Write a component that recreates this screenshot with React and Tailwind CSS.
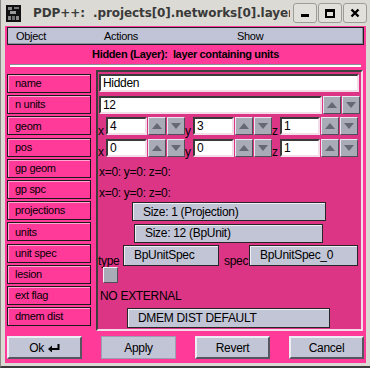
const LABELS = ['name', 'n units', 'geom', 'pos', 'gp geom', 'gp spc', 'projections', 'units', 'unit spec', 'lesion', 'ext flag', 'dmem dist']

function Spin({ up }) {
  return (
    <div className="ml-[1px] w-[18px] h-[18px] shrink-0 bg-[#a9abb6] border border-t-[#e8e8ee] border-l-[#e8e8ee] border-b-[#4e4f58] border-r-[#4e4f58] flex items-center justify-center">
      <svg width="10" height="6" viewBox="0 0 10 6">
        <polygon points={up ? '5,0 10,6 0,6' : '0,0 10,0 5,6'} fill="#666873" />
      </svg>
    </div>
  )
}

function Field({ value, className = '' }) {
  return (
    <div className={`h-[18px] shrink-0 bg-white border-2 border-t-[#3a3a3a] border-l-[#3a3a3a] border-b-[#f2dde8] border-r-[#f2dde8] pl-[2px] text-[12px] leading-[14px] ${className}`}>
      {value}
    </div>
  )
}

function Coord({ axis, value, w = 'w-[41px]' }) {
  return (
    <>
      <span className="w-[8px] shrink-0 text-[12px] leading-[12px] self-end pb-[1px]">{axis}</span>
      <Field value={value} className={w} />
      <Spin up />
      <Spin />
    </>
  )
}

function GreyBtn({ children, className = '' }) {
  return (
    <div className={`bg-[#c2c5d6] border border-[#262626] shadow-[inset_1px_1px_0_#eef0f6] pl-[10px] text-[12px] flex items-center ${className}`}>
      {children}
    </div>
  )
}

function BottomBtn({ children, flat }) {
  return (
    <div className={`w-[75px] h-[23px] bg-[#c2c5d6] flex items-center justify-center gap-[4px] text-[12px] ${flat ? 'border border-[#9c9fb2]' : 'border-2 border-t-[#eceef4] border-l-[#eceef4] border-b-[#55565f] border-r-[#55565f]'}`}>
      {children}
    </div>
  )
}

export default function App() {
  return (
    <div className="w-[370px] h-[368px] bg-[#dcdad5] border-l border-[#8a8884] border-b-2 border-b-[#3c3c3c] flex flex-col font-['Liberation_Sans',Arial,sans-serif] tracking-[-0.3px] text-black overflow-hidden">
      {/* Title bar */}
      <div className="h-[26px] shrink-0 flex items-center pl-[5px] pr-[3px]">
        <svg width="15" height="17" viewBox="0 0 15 17" className="shrink-0">
          <rect width="15" height="17" fill="#111" />
          <rect x="2" y="2" width="4" height="3" fill="#8a8a8a" />
          <rect x="8" y="2" width="5" height="2" fill="#777" />
          <rect x="4" y="6" width="6" height="3" fill="#9a9a9a" />
          <rect x="2" y="11" width="3" height="4" fill="#888" />
          <rect x="6" y="11" width="3" height="4" fill="#6e6e6e" />
          <rect x="10" y="11" width="3" height="4" fill="#888" />
        </svg>
        <div className="ml-[12px] w-[257px] shrink-0 overflow-hidden whitespace-nowrap font-['DejaVu_Sans',sans-serif] font-bold text-[12px] tracking-[-0.1px] text-[#3a3a3a]">
          PDP++:&nbsp;&nbsp;.projects[0].networks[0].layers[1]
        </div>
        <div className="flex gap-[1px] ml-auto">
          <div className="w-[24px] h-[20px] rounded-[3px] border border-[#9e9c96] bg-[#e2e0db] flex items-end justify-center pb-[5px]">
            <div className="w-[8px] h-[3px] bg-black" />
          </div>
          <div className="w-[24px] h-[20px] rounded-[3px] border border-[#9e9c96] bg-[#e2e0db] flex items-center justify-center">
            <div className="w-[10px] h-[9px] border-2 border-t-[3px] border-black" />
          </div>
          <div className="w-[24px] h-[20px] rounded-[3px] border border-[#9e9c96] bg-[#e2e0db] flex items-center justify-center">
            <svg width="10" height="10" viewBox="0 0 10 10">
              <path d="M1.5 1.5 L8.5 8.5 M8.5 1.5 L1.5 8.5" stroke="#000" strokeWidth="2.4" />
            </svg>
          </div>
        </div>
      </div>

      {/* Window body */}
      <div className="mx-[4px] h-[337px] bg-[#ff3a99] flex flex-col px-[2px] pt-[1px]">
        {/* Menu bar */}
        <div className="h-[18px] bg-[#c1c4d6] border border-[#202020] shadow-[inset_-1px_-1px_0_#8a8da0] flex items-center text-[11px]">
          <span className="w-[96px] pl-[8px]">Object</span>
          <span className="w-[133px]">Actions</span>
          <span>Show</span>
        </div>

        <div className="h-[18px] flex items-center justify-center font-bold text-[11px] tracking-[-0.35px]">
          Hidden (Layer):&nbsp;&nbsp;layer containing units
        </div>

        <div className="mx-[3px] mt-[1px] h-[3px] bg-white border-t border-[#8c8c94]" />

        {/* Main area */}
        <div className="flex mt-[3px]">
          <div className="w-[84px] flex flex-col gap-[2.2px] pt-[4px] text-[11px]">
            {LABELS.map(l => (
              <div key={l} className="h-[19px] bg-[#ff3a99] border border-[#1a1a1a] shadow-[inset_1px_1px_0_#ffa6d0] pl-[7px] flex items-center">
                {l}
              </div>
            ))}
          </div>

          <div className="ml-[5px] w-[267px] h-[261px] bg-[#dc3585] border-2 border-t-[#3e3e3e] border-l-[#3e3e3e] border-b-[#f3dbe8] border-r-[#f3dbe8] flex flex-col pt-[2px] text-[11px]">
            <div className="h-[21.2px] flex">
              <Field value="Hidden" className="ml-[1px] w-[260px]" />
            </div>
            <div className="h-[21.2px] flex pt-[1px]">
              <Field value="12" className="ml-[1px] w-[223px]" />
              <Spin up />
              <Spin />
            </div>
            <div className="h-[21.2px] flex items-start pt-[1px]">
              <Coord axis="x" value="4" />
              <Coord axis="y" value="3" />
              <Coord axis="z" value="1" w="w-[40px]" />
            </div>
            <div className="h-[21.2px] flex items-start pt-[1px]">
              <Coord axis="x" value="0" />
              <Coord axis="y" value="0" />
              <Coord axis="z" value="1" w="w-[40px]" />
            </div>
            <div className="h-[21.2px] pt-[4px] pl-[1px] text-[12px]">x=0: y=0: z=0:</div>
            <div className="h-[21.2px] pt-[4px] pl-[1px] text-[12px]">x=0: y=0: z=0:</div>
            <div className="h-[21.2px] flex items-start pt-[1px]">
              <GreyBtn className="ml-[34px] w-[194px] h-[19px]">Size: 1 (Projection)</GreyBtn>
            </div>
            <div className="h-[21.2px] flex items-start pt-[1.5px]">
              <GreyBtn className="ml-[36px] w-[189px] h-[19px]">Size: 12 (BpUnit)</GreyBtn>
            </div>
            <div className="h-[21.2px] flex items-start pt-[1px]">
              <span className="w-[25px] self-end text-[12px] leading-[12px] -mb-[2px]">type</span>
              <GreyBtn className="w-[96px] h-[21px] pl-[9px]">BpUnitSpec</GreyBtn>
              <span className="w-[30px] pl-[5px] self-end text-[12px] leading-[12px] -mb-[2px]">spec</span>
              <GreyBtn className="w-[109px] h-[21px] pl-[8px]">BpUnitSpec_0</GreyBtn>
            </div>
            <div className="h-[21.2px] flex items-start pt-[2px]">
              <div className="ml-[5px] w-[15px] h-[16px] bg-[#a9abb6] border border-t-[#eeeef2] border-l-[#eeeef2] border-b-[#4e4f58] border-r-[#4e4f58]" />
            </div>
            <div className="h-[21.2px] pt-[1px] pl-[2px] text-[12px]">NO EXTERNAL</div>
            <div className="h-[21.2px] flex items-start pt-[1px]">
              <GreyBtn className="ml-[29px] w-[203px] h-[20px] pl-[8px]">DMEM DIST DEFAULT</GreyBtn>
            </div>
          </div>
        </div>

        {/* Bottom buttons */}
        <div className="mt-[5px] flex justify-between">
          <BottomBtn>
            <span>Ok</span>
            <svg width="12" height="8" viewBox="0 0 12 8">
              <path d="M10.5 0 V5 H3" stroke="#000" strokeWidth="2" fill="none" />
              <polygon points="0,5 4,1.5 4,8.5" fill="#000" />
            </svg>
          </BottomBtn>
          <BottomBtn flat>Apply</BottomBtn>
          <BottomBtn>Revert</BottomBtn>
          <BottomBtn>Cancel</BottomBtn>
        </div>
      </div>
    </div>
  )
}
